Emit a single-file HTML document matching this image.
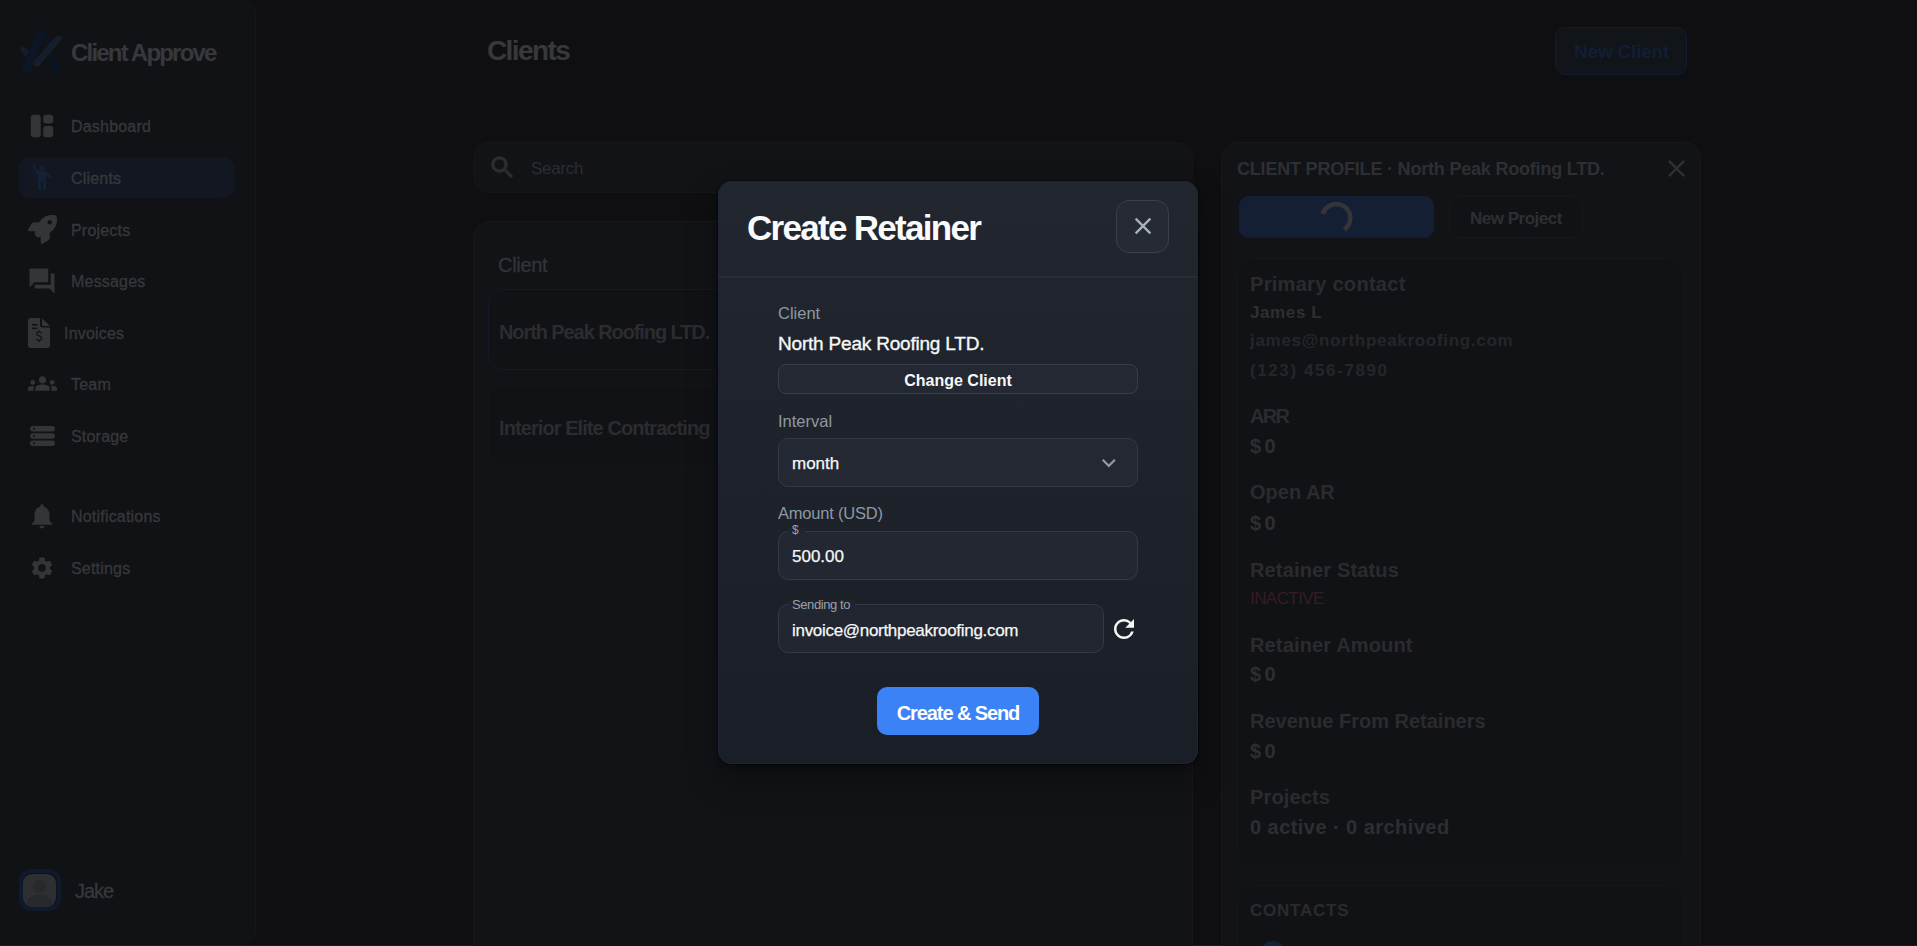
<!DOCTYPE html>
<html><head><meta charset="utf-8">
<style>
*{box-sizing:border-box;margin:0;padding:0}
html,body{width:1917px;height:946px;overflow:hidden;background:#0f0f12;font-family:"Liberation Sans",sans-serif}
.abs{position:absolute}
.t{position:absolute;white-space:nowrap;line-height:1}
#side{position:absolute;left:0;top:0;width:256px;height:945px;background:#111216;border-radius:0 12px 14px 0;border-right:1px solid #16171b}
.nav{position:absolute;left:71px;font-size:16px;letter-spacing:0.2px;color:#37383b;-webkit-text-stroke:0.3px #37383b}
.ico{position:absolute;fill:#343538}
#bottomline{position:absolute;left:0;top:945px;width:1917px;height:1px;background:#1c1d21}
.pl{left:1250px;font-size:20px;font-weight:bold;letter-spacing:0.15px;color:#2a2b2f}
.pv{left:1250px;font-size:20px;font-weight:bold;letter-spacing:3.5px;color:#2d2e32}
.ml{font-size:16.5px;color:#8e98a3}
</style></head><body>

<div id="side">
  <svg class="abs" style="left:15px;top:22px" width="55" height="58" viewBox="15 22 55 58">
    <path d="M38.5 29.2 L45.5 32.8 L29.5 73.6 L21 71.2 Z" fill="#0c1624"/>
    <path d="M42 36 L47 31.5 L61.5 72.5 L54.5 74.8 Z" fill="#0b1522"/>
    <path d="M21 47.5 Q23 46 26 48 L29 51 L26.5 57.5 L21 51 Z" fill="#141e2a"/>
    <path d="M56.5 36 Q60.5 34.5 62.5 38.5 L39.5 65.5 Q37 67 34 66 L33 62 Z" fill="#151f2c"/>
  </svg>
  <div class="t" style="left:71px;top:41px;font-size:24px;font-weight:bold;letter-spacing:-1.8px;color:#37383c">Client Approve</div>

  <div class="abs" style="left:19px;top:157px;width:216px;height:41px;border-radius:12px;background:#131722"></div>

  <svg class="ico" style="left:27.4px;top:110.6px" width="30" height="30" viewBox="0 0 24 24"><path d="M9 21H5c-1.1 0-2-.9-2-2V5c0-1.1.9-2 2-2h4c1.1 0 2 .9 2 2v14c0 1.1-.9 2-2 2zm6 0h4c1.1 0 2-.9 2-2v-5c0-1.1-.9-2-2-2h-4c-1.1 0-2 .9-2 2v5c0 1.1.9 2 2 2zm6-13V5c0-1.1-.9-2-2-2h-4c-1.1 0-2 .9-2 2v3c0 1.1.9 2 2 2h4c1.1 0 2-.9 2-2z"/></svg>
  <div class="t nav" style="top:119px">Dashboard</div>

  <svg class="abs" style="left:32px;top:165px" width="21" height="25" viewBox="0 0 21 25"><circle cx="10" cy="3" r="2.6" fill="#142036"/><path d="M1 0 L3 0 L5 5 L14 6 L20 12 L18 13.5 L14 10 L14 25 L11 25 L11 17 L9 17 L9 25 L6 25 L6 10 L2 5 Z" fill="#142036"/></svg>
  <div class="t nav" style="top:171px">Clients</div>

  <svg class="ico" style="left:28px;top:215px" width="29" height="29" viewBox="0 0 512 512"><path d="M156.6 384.9L125.7 354c-8.5-8.5-11.5-20.8-7.7-32.2c3-8.9 7-20.5 11.8-33.8L24 288c-8.6 0-16.6-4.6-20.9-12.1s-4.2-16.700.2-24.1l52.5-88.5c13-21.900 36.5-35.3 61.9-35.3l82.3 0c2.4-4 4.8-7.7 7.2-11.3C289.1-4.1 411.1-8.1 483.9 5.3c11.6 2.1 20.6 11.2 22.8 22.8c13.4 72.9 9.3 194.8-111.4 276.7c-3.5 2.4-7.3 4.8-11.3 7.2v82.3c0 25.4-13.4 49-35.3 61.9l-88.5 52.5c-7.4 4.4-16.6 4.5-24.1 .2s-12.1-12.2-12.1-20.9V380.8c-14.1 4.9-26.4 8.9-35.7 11.9c-11.2 3.6-23.4 .5-31.8-7.8zM384 168a40 40 0 1 0 0-80 40 40 0 1 0 0 80z"/></svg>
  <div class="t nav" style="top:223px">Projects</div>

  <svg class="ico" style="left:27.4px;top:265.5px" width="30" height="30" viewBox="0 0 24 24"><path d="M21 6h-2v9H6v2c0 .55.45 1 1 1h11l4 4V7c0-.55-.45-1-1-1zm-4 6V3c0-.55-.45-1-1-1H3c-.55 0-1 .45-1 1v14l4-4h10c.55 0 1-.45 1-1z"/></svg>
  <div class="t nav" style="top:274px">Messages</div>

  <svg class="ico" style="left:28px;top:318px" width="22" height="30" viewBox="0 0 22 30"><path d="M3 0 H12 V7 Q12 9.5 14.5 9.5 H22 V27 Q22 30 19 30 H3 Q0 30 0 27 V3 Q0 0 3 0 Z"/><path d="M14 0.5 L22 8 H15.5 Q14 8 14 6.5 Z"/><rect x="4" y="6" width="5.5" height="1.6" fill="#111216"/><rect x="4" y="9.5" width="5.5" height="1.6" fill="#111216"/><path d="M13.2 15.2 Q12.6 13.8 11 13.8 Q8.6 13.8 8.6 15.8 Q8.6 17.4 11 17.9 Q13.6 18.4 13.6 20.3 Q13.6 22.4 11 22.4 Q9 22.4 8.4 20.8 M11 12.2 V13.8 M11 22.4 V24.2" fill="none" stroke="#111216" stroke-width="1.2"/></svg>
  <div class="t nav" style="left:64px;top:326px">Invoices</div>

  <svg class="ico" style="left:27.8px;top:368.6px" width="29" height="29" viewBox="0 0 24 24"><path d="M12 12.75c1.63 0 3.07.39 4.24.9 1.08.48 1.76 1.56 1.760 2.730V18H6v-1.61c0-1.18.68-2.26 1.76-2.73 1.17-.52 2.61-.91 4.24-.91zM4 13c1.1 0 2-.9 2-2s-.9-2-2-2-2 .9-2 2 .9 2 2 2zm1.13 1.1c-.37-.06-.74-.1-1.13-.1-.99 0-1.93.21-2.78.58A2.010 2.010 0 0 0 0 16.43V18h4.5v-1.61c0-.83.23-1.61.63-2.29zM20 13c1.1 0 2-.9 2-2s-.9-2-2-2-2 .9-2 2 .9 2 2 2zm4 3.43c0-.81-.48-1.53-1.22-1.85A6.950 6.950 0 0 0 20 14c-.39 0-.76.04-1.13.1.4.68.63 1.46.63 2.29V18H24v-1.57zM12 6c1.66 0 3 1.34 3 3s-1.34 3-3 3-3-1.34-3-3 1.34-3 3-3z"/></svg>
  <div class="t nav" style="top:377px">Team</div>

  <svg class="ico" style="left:30px;top:426px" width="25" height="20" viewBox="0 0 25 20"><rect x="0" y="0" width="25" height="5.5" rx="2.7"/><rect x="0" y="7.2" width="25" height="5.5" rx="2.7"/><rect x="0" y="14.5" width="25" height="5.5" rx="2.7"/><circle cx="4" cy="2.7" r="1" fill="#121317"/><circle cx="4" cy="10" r="1" fill="#121317"/><circle cx="4" cy="17.2" r="1" fill="#121317"/></svg>
  <div class="t nav" style="top:429px">Storage</div>

  <svg class="ico" style="left:27px;top:500.6px" width="30" height="30" viewBox="0 0 24 24"><path d="M12 22c1.1 0 2-.9 2-2h-4c0 1.1.89 2 2 2zm6-6v-5c0-3.07-1.64-5.64-4.5-6.32V4c0-.83-.67-1.5-1.5-1.5s-1.5.67-1.5 1.5v.68C7.63 5.36 6 7.92 6 11v5l-2 2v1h16v-1l-2-2z"/></svg>
  <div class="t nav" style="top:509px">Notifications</div>

  <svg class="ico" style="left:29px;top:555px" width="26" height="26" viewBox="0 0 24 24"><path d="M19.14 12.94c.04-.3.06-.61.06-.94 0-.32-.02-.64-.07-.94l2.03-1.58a.49.49 0 0 0 .12-.61l-1.92-3.32a.49.49 0 0 0-.59-.22l-2.39.96c-.5-.38-1.03-.7-1.62-.94l-.36-2.54a.48.48 0 0 0-.48-.41h-3.84c-.24 0-.43.17-.47.41l-.36 2.54c-.59.24-1.13.57-1.62.94l-2.39-.96a.48.48 0 0 0-.59.22L2.74 8.87a.47.47 0 0 0 .12.61l2.03 1.58c-.05.3-.09.63-.09.94s.02.64.07.94l-2.03 1.58a.49.49 0 0 0-.12.61l1.92 3.32c.12.22.37.29.59.22l2.39-.96c.5.38 1.03.7 1.62.94l.36 2.54c.05.24.24.41.48.41h3.84c.24 0 .44-.17.47-.41l.36-2.54c.59-.24 1.13-.56 1.62-.94l2.39.96c.22.08.47 0 .59-.22l1.92-3.32c.12-.22.07-.47-.12-.61l-2.01-1.58zM12 15.6c-1.98 0-3.6-1.62-3.6-3.6s1.62-3.6 3.6-3.6 3.6 1.62 3.6 3.6-1.62 3.6-3.6 3.6z"/></svg>
  <div class="t nav" style="top:561px">Settings</div>

  <div class="abs" style="left:19px;top:869px;width:42px;height:42px;border-radius:12px;border:4px solid #0f1a2d;background:#101115"></div>
  <div class="abs" style="left:23px;top:874px;width:33px;height:33px;border-radius:9px;background:#2e2f32;overflow:hidden">
    <div class="abs" style="left:10px;top:6px;width:13px;height:13px;border-radius:50%;background:#28292c"></div>
    <div class="abs" style="left:4px;top:21px;width:25px;height:16px;border-radius:50% 50% 0 0;background:#28292c"></div>
  </div>
  <div class="t" style="left:75px;top:881px;font-size:20px;letter-spacing:-1px;color:#37383c;-webkit-text-stroke:0.3px #37383c">Jake</div>
</div>
<div id="bottomline"></div>


<!-- MAIN -->
<div class="t" style="left:487px;top:37px;font-size:28px;font-weight:bold;letter-spacing:-1.6px;color:#37383c">Clients</div>
<div class="abs" style="left:1555px;top:27px;width:132px;height:48px;border-radius:10px;border:1.5px solid #111c2f;background:#111419"></div>
<div class="t" style="left:1574px;top:42px;font-size:19px;font-weight:bold;letter-spacing:-0.2px;color:#121e33">New Client</div>

<div class="abs" style="left:473px;top:142px;width:720px;height:51px;border-radius:16px;background:#111317;border:1px solid #15161a"></div>
<svg class="abs" style="left:488px;top:153px" width="29" height="29" viewBox="0 0 24 24"><path fill="#2d2e32" stroke="#2d2e32" stroke-width="0.7" d="M15.5 14h-.79l-.28-.27A6.471 6.471 0 0 0 16 9.5 6.5 6.5 0 1 0 9.5 16c1.61 0 3.09-.59 4.23-1.57l.27.28v.79l5 4.99L20.49 19l-4.99-5zm-6 0C7.01 14 5 11.99 5 9.5S7.01 5 9.5 5 14 7.01 14 9.5 11.99 14 9.5 14z"/></svg>
<div class="t" style="left:531px;top:160px;font-size:17px;letter-spacing:-0.3px;color:#2c2d31">Search</div>

<div class="abs" style="left:473px;top:221px;width:720px;height:740px;border-radius:16px;background:#121317;border:1px solid #16171b"></div>
<div class="t" style="left:498px;top:255px;font-size:20px;letter-spacing:-0.3px;color:#333438;-webkit-text-stroke:0.3px #333438">Client</div>
<div class="abs" style="left:488px;top:289px;width:692px;height:81px;border-radius:14px;background:#111216;border:1px solid #121a28"></div>
<div class="t" style="left:499px;top:322px;font-size:20px;font-weight:bold;letter-spacing:-1.09px;color:#2b2c30">North Peak Roofing LTD.</div>
<div class="abs" style="left:488px;top:385px;width:692px;height:81px;border-radius:14px;background:#111216;border:1px solid #15161a"></div>
<div class="t" style="left:499px;top:418px;font-size:20px;font-weight:bold;letter-spacing:-0.92px;color:#2b2c30">Interior Elite Contracting</div>

<!-- RIGHT PANEL -->
<div class="abs" style="left:1221px;top:142px;width:480px;height:820px;border-radius:16px;background:#121317;border:1px solid #16171b"></div>
<div class="t" style="left:1237px;top:160px;font-size:18px;font-weight:bold;letter-spacing:-0.2px;color:#2e2f33">CLIENT PROFILE · North Peak Roofing LTD.</div>
<svg class="abs" style="left:1661.6px;top:153.5px" width="29" height="29" viewBox="0 0 24 24"><path fill="#303135" d="M19 6.41L17.59 5 12 10.59 6.41 5 5 6.41 10.59 12 5 17.59 6.41 19 12 13.41 17.59 19 19 17.59 13.41 12z"/></svg>
<div class="abs" style="left:1239px;top:196px;width:195px;height:42px;border-radius:10px;background:#141f35"></div>
<svg class="abs" style="left:1320px;top:200px" width="34" height="34" viewBox="0 0 34 34"><path d="M2.9 14 A14 14 0 1 1 24.2 29.6" fill="none" stroke="#353537" stroke-width="4.6"/></svg>
<div class="abs" style="left:1449px;top:196px;width:134px;height:42px;border-radius:10px;background:#111216;border:1px solid #17181c"></div>
<div class="t" style="left:1470px;top:210px;font-size:17px;font-weight:bold;letter-spacing:-0.5px;color:#2e2f33">New Project</div>

<div class="abs" style="left:1237px;top:258px;width:448px;height:608px;border-radius:16px;background:#111216;border:1px solid #15161a"></div>
<div class="t pl" style="top:274px;letter-spacing:0.3px">Primary contact</div>
<div class="t" style="left:1250px;top:304px;font-size:17px;font-weight:bold;letter-spacing:0.6px;color:#2e2f33">James L</div>
<div class="t" style="left:1250px;top:332px;font-size:17px;font-weight:bold;letter-spacing:0.7px;color:#25262a">james@northpeakroofing.com</div>
<div class="t" style="left:1250px;top:362px;font-size:17px;font-weight:bold;letter-spacing:1.6px;color:#25262a">(123) 456-7890</div>
<div class="t pl" style="top:406px;letter-spacing:-1.7px">ARR</div>
<div class="t pv" style="top:436px">$0</div>
<div class="t pl" style="top:482px;letter-spacing:0px">Open AR</div>
<div class="t pv" style="top:513px">$0</div>
<div class="t pl" style="top:560px">Retainer Status</div>
<div class="t" style="left:1250px;top:590px;font-size:17px;letter-spacing:-0.57px;color:#361d21">INACTIVE</div>
<div class="t pl" style="top:635px">Retainer Amount</div>
<div class="t pv" style="top:664px">$0</div>
<div class="t pl" style="top:711px;letter-spacing:0px">Revenue From Retainers</div>
<div class="t pv" style="top:741px">$0</div>
<div class="t pl" style="top:787px">Projects</div>
<div class="t pv" style="top:817px;letter-spacing:0.45px">0 active · 0 archived</div>

<div class="abs" style="left:1237px;top:885px;width:448px;height:100px;border-radius:16px;background:#111216;border:1px solid #15161a"></div>
<div class="t" style="left:1250px;top:902px;font-size:17px;font-weight:bold;letter-spacing:0.77px;color:#2a2b2f">CONTACTS</div>
<div class="abs" style="left:1260px;top:941px;width:26px;height:26px;border-radius:50%;background:#13203a"></div>

<!-- MODAL -->
<div id="modal" class="abs" style="left:718px;top:181px;width:480px;height:583px;border-radius:14px;background:linear-gradient(#22272f,#1a1e27);box-shadow:inset 0 0 0 1px #1e2532,0 0 0 1px rgba(0,0,0,.25),0 2px 4px rgba(0,0,0,.35),0 16px 32px rgba(0,0,0,.3)">
  <div class="t" style="left:29px;top:29px;font-size:35px;font-weight:bold;letter-spacing:-1.7px;color:#fafafa">Create Retainer</div>
  <div class="abs" style="left:398px;top:19px;width:53px;height:53px;border-radius:13px;border:1px solid #3a3f49;background:#252a34"></div>
  <svg class="abs" style="left:410.9px;top:31.3px" width="28" height="28" viewBox="0 0 24 24"><path fill="#a8b0ba" d="M19 6.41L17.59 5 12 10.59 6.41 5 5 6.41 10.59 12 5 17.59 6.41 19 12 13.41 17.59 19 19 17.59 13.41 12z"/></svg>
  <div class="abs" style="left:0;top:95px;width:480px;height:2px;background:#272d36"></div>
  <div class="t ml" style="left:60px;top:124px">Client</div>
  <div class="t" style="left:60px;top:153px;font-size:19px;letter-spacing:-0.2px;-webkit-text-stroke:0.35px #f7f7f7;color:#f7f7f7">North Peak Roofing LTD.</div>
  <div class="abs" style="left:60px;top:183px;width:360px;height:30px;border-radius:8px;border:1px solid #383e49;background:#232832"></div>
  <div class="t" style="left:60px;top:192px;width:360px;text-align:center;font-size:16px;font-weight:bold;color:#f7f7f7">Change Client</div>

  <div class="t ml" style="left:60px;top:232px">Interval</div>
  <div class="abs" style="left:60px;top:257px;width:360px;height:49px;border-radius:10px;border:1px solid #343a45;background:#232832"></div>
  <div class="t" style="left:74px;top:274px;font-size:17px;color:#f7f7f7;-webkit-text-stroke:0.25px #f7f7f7">month</div>
  <svg class="abs" style="left:377.3px;top:268px" width="27.6" height="27.6" viewBox="0 0 24 24"><path fill="#9098a3" d="M16.59 8.59 12 13.17 7.41 8.59 6 10l6 6 6-6z"/></svg>

  <div class="t ml" style="left:60px;top:324px;letter-spacing:-0.2px">Amount (USD)</div>
  <div class="abs" style="left:60px;top:350px;width:360px;height:49px;border-radius:10px;border:1px solid #343a45;background:#222731"></div>
  <div class="abs" style="left:70px;top:346px;width:17px;height:6px;background:#212530"></div>
  <div class="t" style="left:74px;top:343px;font-size:12px;color:#9aa2ac">$</div>
  <div class="t" style="left:74px;top:367px;font-size:17px;color:#f7f7f7;-webkit-text-stroke:0.25px #f7f7f7">500.00</div>

  <div class="abs" style="left:60px;top:423px;width:326px;height:49px;border-radius:10px;border:1px solid #333944;background:#212630"></div>
  <div class="abs" style="left:71px;top:419px;width:66px;height:6px;background:#20242d"></div>
  <div class="t" style="left:74px;top:417px;font-size:13px;letter-spacing:-0.4px;color:#9aa2ac">Sending to</div>
  <div class="t" style="left:74px;top:441px;font-size:17px;letter-spacing:-0.3px;color:#f7f7f7;-webkit-text-stroke:0.25px #f7f7f7">invoice@northpeakroofing.com</div>
  <svg class="abs" style="left:391px;top:433px" width="30" height="30" viewBox="0 0 24 24"><path fill="#f7f7f7" d="M17.65 6.35A7.958 7.958 0 0 0 12 4c-4.42 0-7.99 3.58-7.99 8s3.57 8 7.99 8c3.73 0 6.84-2.55 7.73-6h-2.08A5.99 5.99 0 0 1 12 18c-3.31 0-6-2.69-6-6s2.69-6 6-6c1.66 0 3.14.69 4.22 1.78L13 11h7V4l-2.35 2.35z"/></svg>

  <div class="abs" style="left:159px;top:506px;width:162px;height:48px;border-radius:10px;background:#3b82f6"></div>
  <div class="t" style="left:159px;top:522px;width:162px;text-align:center;font-size:20px;font-weight:bold;letter-spacing:-1.1px;color:#ffffff">Create &amp; Send</div>
</div>

</body></html>
